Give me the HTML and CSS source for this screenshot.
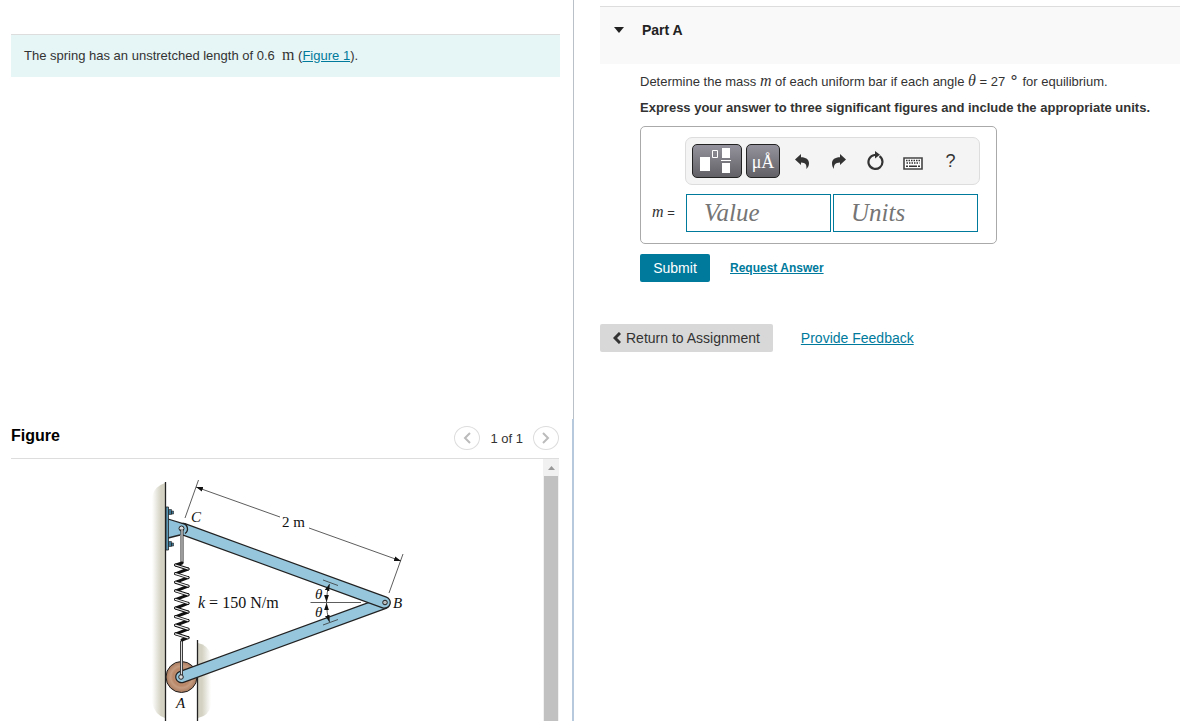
FILE: index.html
```
<!DOCTYPE html>
<html lang="en">

<head>
    <meta charset="utf-8">
    <title>Part A</title>
    <link rel="stylesheet" href="styles.css">
</head>

<body>
<div class="page">
    <div class="left">
        <section class="problem">
            <p class="statement">The spring has an unstretched length of 0.6 &nbsp;<span class="unit">m</span> (<a href="#figure">Figure 1</a>).</p>
        </section>
        <section class="figure" id="figure">
            <header class="figure-head">
                <h2>Figure</h2>
                <div class="pager">
                    <button type="button" aria-label="Previous figure">
                        <svg width="8" height="12" viewBox="0 0 8 12"><path d="M7 1L2 6l5 5"/></svg>
                    </button>
                    <span>1 of 1</span>
                    <button type="button" aria-label="Next figure">
                        <svg width="8" height="12" viewBox="0 0 8 12"><path d="M1 1l5 5-5 5"/></svg>
                    </button>
                </div>
            </header>
            <div class="figure-body">
                <div class="canvas">
                    <svg class="diagram" width="280" height="270" viewBox="137 470 280 270">
                        <defs>
                            <linearGradient id="wall-left">
                                <stop offset="0" stop-color="#d3d1c1" stop-opacity="0"/>
                                <stop offset=".7" stop-color="#d3d1c1"/>
                            </linearGradient>
                            <linearGradient id="wall-right">
                                <stop offset=".3" stop-color="#d3d1c1"/>
                                <stop offset="1" stop-color="#d3d1c1" stop-opacity="0"/>
                            </linearGradient>
                            <radialGradient id="wood">
                                <stop offset="0" stop-color="#c69c80"/>
                                <stop offset=".55" stop-color="#b98768"/>
                                <stop offset=".7" stop-color="#c59c80"/>
                                <stop offset="1" stop-color="#a9795c"/>
                            </radialGradient>
                            <marker id="arrow" markerWidth="8" markerHeight="6" refX="7" refY="3" orient="auto-start-reverse" markerUnits="userSpaceOnUse">
                                <path d="M0 .6L7 3 0 5.4z" fill="#111" stroke="none"/>
                            </marker>
                        </defs>

                        <!-- walls -->
                        <path d="M152 496q3-10 13-13v235q-10-3-13-15z" fill="url(#wall-left)"/>
                        <path d="M198 643q10 2 13 12v50q-2 11-13 13z" fill="url(#wall-right)"/>
                        <path class="edge" d="M165.5 482v258M197.5 640v100"/>

                        <!-- roller -->
                        <circle cx="181.5" cy="677" r="15.5" fill="url(#wood)" stroke="#222"/>

                        <!-- bars -->
                        <path class="bar-edge" d="M181.5 677L384 603"/>
                        <path class="bar" d="M181.5 677L384 603"/>
                        <path class="bar-edge" d="M183 529l201.500 73.500"/>
                        <path class="bar" d="M183 529l201.500 73.500"/>
                        <circle cx="385" cy="602.500" r="2.300" fill="#bbb" stroke="#222"/>

                        <!-- bracket -->
                        <path d="M168 519l14 4.500a5.500 5.500 0 0 1 0 11L168 538z" fill="#8fc2da"/>
                        <path class="edge" d="M168 519l15 4.500a5.500 5.500 0 0 1 2 10M168 538l12-3"/>
                        <path d="M168.500 509.500h3v5h-3zM171.500 511h2v3h-2zM168.500 541.500h3v5h-3zM171.500 543h2v3h-2z" fill="#3c7896" stroke="#222" stroke-width=".6"/>
                        <path d="M166 507h2.500v43H166z" fill="#5c9ab8" stroke="#222" stroke-width=".8"/>
                        <circle cx="181.500" cy="528.500" r="2.500" fill="#ddd" stroke="#222"/>

                        <!-- spring: back strands first, front strands over them -->
                        <path d="M182 529v34M181.500 641v36" stroke="#222" stroke-width="3"/>
                        <path d="M182 529v35M181.500 640v37" stroke="#ddd" stroke-width="1.300"/>
                        <path class="coil-back" d="M182 563l-6 2M188 569l-12 4.600M188 577.600l-12 4.600M188 586.200l-12 4.600M188 594.800l-12 4.600M188 603.400l-12 4.600M188 612l-12 4.600M188 620.600l-12 4.600M188 629.200l-12 4.600M188 637.600l-6 2.400"/>
                        <path class="coil-edge" d="M175.500 565l12.500 4M175.500 573.600l12.500 4M175.500 582.200l12.500 4M175.500 590.800l12.500 4M175.500 599.400l12.500 4M175.500 608l12.500 4M175.500 616.600l12.500 4M175.500 625.200l12.500 4M175.500 633.800l12.500 4"/>
                        <path class="coil" d="M175.500 565l12.500 4M175.500 573.600l12.500 4M175.500 582.200l12.500 4M175.500 590.800l12.500 4M175.500 599.400l12.500 4M175.500 608l12.500 4M175.500 616.600l12.500 4M175.500 625.200l12.500 4M175.500 633.800l12.500 4"/>
                        <circle cx="181" cy="677" r="2.300" fill="#ddd" stroke="#222"/>

                        <!-- dimensions -->
                        <g class="thin">
                            <path d="M198.500 480L185 518M403 554l-14 39"/>
                            <path d="M280 517l-84-30" marker-end="url(#arrow)"/>
                            <path d="M309 528l92 33" marker-end="url(#arrow)"/>
                            <path d="M310.500 602.500H361M323 580l15 5.500M323 625l15-5.500"/>
                            <path d="M326.500 602q0-10 3-18" marker-start="url(#arrow)" marker-end="url(#arrow)"/>
                            <path d="M326.500 603q0 10 3 19" marker-start="url(#arrow)" marker-end="url(#arrow)"/>
                        </g>

                        <g class="labels">
                            <text x="191" y="522" class="var">C</text>
                            <text x="282" y="527">2 m</text>
                            <text x="198" y="608" class="stiffness"><tspan class="var">k</tspan> = 150 N/m</text>
                            <text x="315" y="599" class="var">θ</text>
                            <text x="315" y="617" class="var">θ</text>
                            <text x="393" y="608" class="var">B</text>
                            <text x="176" y="708" class="var">A</text>
                        </g>
                    </svg>
                </div>
                <div class="scrollbar">
                    <svg width="7" height="4" viewBox="0 0 7 4"><path d="M0 4l3.500-4L7 4z"/></svg>
                    <div class="thumb"></div>
                </div>
            </div>
        </section>
    </div>

    <main class="right">
        <header class="part-head">
            <svg width="10" height="6" viewBox="0 0 10 6"><path d="M0 0h10L5 6z"/></svg>
            <h2>Part A</h2>
        </header>
        <form class="part">
            <p>Determine the mass <i class="math">m</i> of each uniform bar if each angle <i class="math">θ</i> = 27 <span class="degree">∘</span> for equilibrium.</p>
            <p class="bold">Express your answer to three significant figures and include the appropriate units.</p>
            <div class="answer">
                <div class="toolbar">
                    <button type="button" class="dark templates" aria-label="Templates">
                        <svg width="34" height="26" viewBox="0 0 34 26">
                            <path d="M0 9h10v14H0zM22 0h8v10h-8zM21 12h10v1H21zM22 15h8v10h-8z" fill="#fff"/>
                            <path d="M12.500 2.500h5v7h-5z" fill="none" stroke="#fff"/>
                        </svg>
                    </button>
                    <button type="button" class="dark symbols">μÅ</button>
                    <button type="button" class="tool" aria-label="Undo">
                        <svg width="14" height="15" viewBox="0 0 14 15"><path d="M0 5.500L6 0v3.200c5 0 8 2.300 8 6 0 2.500-1 4.300-2.700 5.800.7-3.600-.6-6.400-5.300-6.400V11z"/></svg>
                    </button>
                    <button type="button" class="tool" aria-label="Redo">
                        <svg width="14" height="15" viewBox="0 0 14 15"><path d="M14 5.500L8 0v3.200c-5 0-8 2.300-8 6 0 2.500.7 4.300 2 5.800-.5-3.600 1.300-6.400 6-6.400V11z"/></svg>
                    </button>
                    <button type="button" class="tool" aria-label="Reset">
                        <svg width="18" height="20" viewBox="0 0 18 20"><path d="M12.500 5.200a7 7 0 1 1-5-1.200h2.500" fill="none" stroke="#333" stroke-width="2.200"/><path d="M8 0l5 3.800-5 3.800z"/></svg>
                    </button>
                    <button type="button" class="tool keyboard" aria-label="Keyboard">
                        <svg width="20" height="13" viewBox="0 0 20 13"><path d="M1 1h18v11H1z" fill="#fff" stroke="#444" stroke-width="1.600"/><path d="M3 3.500h14M3.500 6h13" fill="none" stroke="#333" stroke-width="1.600" stroke-dasharray="1.500 1"/><path d="M3 8.500h2v1.500H3zM6 8.500h8v1.500H6zM15 8.500h2v1.500h-2z"/></svg>
                    </button>
                    <button type="button" class="tool help" aria-label="Help">?</button>
                </div>
                <div class="fields">
                    <label for="value"><i class="math">m</i> =</label>
                    <input id="value" name="value" placeholder="Value"/>
                    <input id="units" name="units" placeholder="Units" aria-label="Units"/>
                </div>
            </div>
            <div class="actions">
                <button type="submit" class="submit">Submit</button>
                <a href="#answer">Request Answer</a>
            </div>
        </form>
        <footer class="links">
            <button type="button" class="return">
                <svg width="8" height="12" viewBox="0 0 8 12"><path d="M7 1L2 6l5 5"/></svg>
                Return to Assignment
            </button>
            <a href="#feedback">Provide Feedback</a>
        </footer>
    </main>
</div>
</body>

</html>
```
FILE: styles.css
```
* {
    box-sizing: border-box;
}

body {
    margin: 0;
    color: #333;
    background: white;
    font-family: "Liberation Sans", Arial, sans-serif;
    font-size: 13px;
    line-height: 20px;
}

h2, p {
    margin: 0;
}

a {
    color: #007a9c;
}

button, input {
    margin: 0;
    font-family: inherit;
}

button {
    display: flex;
    align-items: center;
    justify-content: center;
    padding: 0;
    border: none;
    background: none;
    color: #333;
}

.page {
    display: grid;
    grid-template-columns: 574fr 606fr;
    height: 100vh;
    overflow: hidden;
}

.left {
    display: grid;
    grid-template-rows: 419fr 302fr;
    min-height: 0;
}

.problem {
    padding: 34px 13px 0 11px;
    border-right: 1px solid #b9c0c8;
}

.statement {
    padding: 11px 13px;
    border-top: 1px solid #ddd;
    background: #e6f5f5;
}

.unit, .math, .degree {
    font-family: "Liberation Serif", "Times New Roman", serif;
    font-size: 16px;
    line-height: 16px;
}

.degree {
    line-height: 8px;
    vertical-align: 3px;
}

.figure {
    display: flex;
    flex-direction: column;
    min-height: 0;
    padding-left: 11px;
    padding-right: 13px;
    border-right: 2px solid #b7cadd;
}

.figure-head {
    display: flex;
    justify-content: space-between;
    height: 40px;
    border-bottom: 1px solid #ddd;
}

.figure-head h2 {
    padding-top: 7px;
    color: #000;
    font-size: 16px;
}

.pager {
    display: flex;
    gap: 10px;
    padding-top: 7px;
    line-height: 26px;
}

.pager button {
    width: 26px;
    height: 24px;
    border: 1px solid #ddd;
    border-radius: 50%;
}

.pager path {
    fill: none;
    stroke: #bbb;
    stroke-width: 2;
}

.figure-body {
    display: flex;
    flex: 1;
    min-height: 0;
}

.canvas {
    flex: 1;
    padding-top: 11px;
    overflow: hidden;
}

.diagram {
    display: block;
    margin: 0 auto;
}

.diagram .edge {
    fill: none;
    stroke: #222;
    stroke-width: 1.3;
}

.diagram .bar-edge, .diagram .bar {
    stroke: #222;
    stroke-width: 12.6;
    stroke-linecap: round;
}

.diagram .bar {
    stroke: #96c6dc;
    stroke-width: 10.2;
}

.coil-back, .coil-edge, .coil {
    stroke: #111;
    stroke-width: 3;
    stroke-linecap: round;
}

.coil {
    stroke: #eee;
    stroke-width: 1.3;
}

.thin {
    fill: none;
    stroke: #333;
    stroke-width: .8;
}

.labels {
    fill: #111;
    font-family: "Liberation Serif", "Times New Roman", serif;
    font-size: 15px;
}

.stiffness {
    font-size: 16px;
}

.var {
    font-style: italic;
}

.scrollbar {
    display: flex;
    flex-direction: column;
    align-items: center;
    gap: 6px;
    width: 16px;
    padding-top: 7px;
    background: #f1f1f1;
}

.scrollbar path {
    fill: #999;
}

.thumb {
    flex: 1;
    width: 14px;
    background: #c1c1c1;
}

.right {
    padding: 6px 0 0 26px;
}

.part-head {
    display: flex;
    align-items: flex-start;
    gap: 18px;
    height: 58px;
    padding: 13px 14px;
    border-top: 1px solid #ddd;
    background: #f9f9f9;
}

.part-head svg {
    margin-top: 7px;
    fill: #222;
}

.part-head h2 {
    color: #222;
    font-size: 14px;
}

.part {
    padding: 8px 0 0 40px;
}

.part p {
    margin-bottom: 6px;
}

.bold {
    font-weight: bold;
}

.part .answer {
    width: 357px;
    margin-top: 8px;
    padding: 10px 16px 11px 11px;
    border: 1px solid #aaa;
    border-radius: 5px;
}

.toolbar {
    display: flex;
    align-items: center;
    height: 48px;
    margin-left: 33px;
    padding: 0 10px 0 6px;
    border: 1px solid #ddd;
    border-radius: 7px;
    background: #f4f4f4;
}

.dark {
    height: 34px;
    border: 1px solid #222;
    border-radius: 5px;
    background: linear-gradient(#94929c, #626166);
    color: white;
}

.templates {
    width: 50px;
    margin-right: 4px;
}

.symbols {
    width: 34px;
    margin-right: 3px;
    padding-top: 3px;
    font-family: "Liberation Serif", "Times New Roman", serif;
    font-size: 18px;
}

.tool {
    flex: 1;
    height: 34px;
    fill: #333;
}

.keyboard {
    padding-top: 4px;
}

.help {
    font-size: 18px;
}

.fields {
    display: flex;
    align-items: center;
    gap: 2px;
    margin-top: 9px;
    padding-right: 2px;
}

.fields label {
    width: 32px;
}

.fields input {
    flex: 1;
    min-width: 0;
    height: 38px;
    padding: 0 17px;
    border: 1px solid #007a9c;
    background: white;
    font-family: "Liberation Serif", "Times New Roman", serif;
    font-size: 25px;
    font-style: italic;
}

.fields input::placeholder {
    color: #757575;
}

.actions {
    display: flex;
    align-items: center;
    gap: 20px;
    margin-top: 10px;
}

.actions a {
    font-size: 12px;
    font-weight: bold;
}

.submit {
    width: 70px;
    height: 28px;
    border-radius: 2px;
    background: #007a9c;
    color: white;
    font-size: 14px;
}

.links {
    display: flex;
    align-items: center;
    gap: 28px;
    margin-top: 42px;
    font-size: 14px;
}

.return {
    gap: 5px;
    height: 28px;
    padding: 0 13px;
    border-radius: 2px;
    background: #d8d8d8;
    font-size: 14px;
}

.return path {
    fill: none;
    stroke: #333;
    stroke-width: 3;
}
```
